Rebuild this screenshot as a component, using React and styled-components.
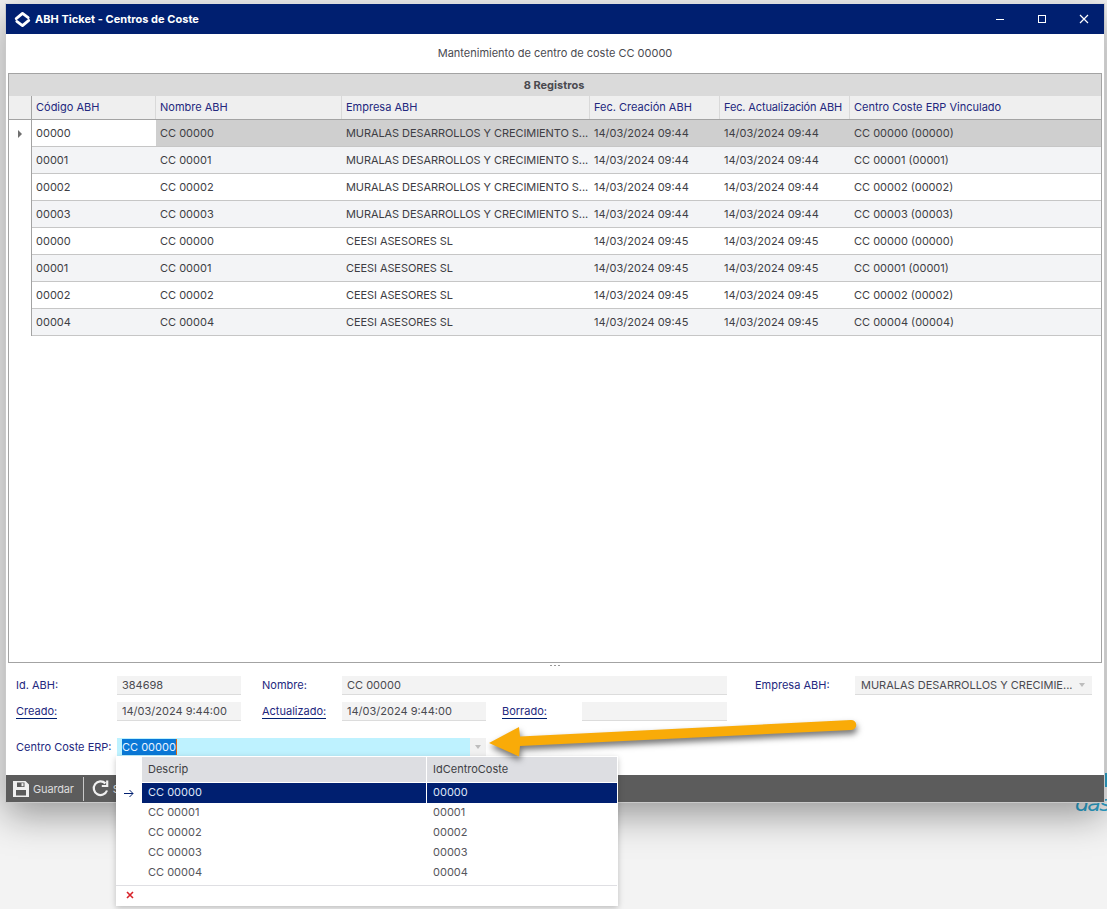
import React from "react";
import styled, { createGlobalStyle } from "styled-components";

const Global = createGlobalStyle`
  html, body { margin: 0; padding: 0; background: #f3f3f3; }
  #root { width: 1107px; height: 909px; overflow: hidden; }
  * { box-sizing: border-box; }
`;
const navy = "#001f70";
const linkBlue = "#23287e";
const textGrey = "#4a4a50";

const Desktop = styled.div`
  position: relative; width: 1107px; height: 909px; overflow: hidden;
  padding: 3px 2px 0 5px; font: 11px Inter, "Liberation Sans", sans-serif; color: ${textGrey};
  background: #f3f3f3;
`;
const BackText = styled.div`
  position: absolute; left: 1075px; top: 791px; font: italic 22px "DejaVu Sans", sans-serif; color: #2ea6cf; letter-spacing: -1.6px;
`;
const BackDot = styled.div`
  position: absolute; left: 1104px; top: 773px; width: 3px; height: 14px; background: #2ea6cf;
`;
const Win = styled.div`
  position: relative; height: 800px; display: flex; flex-direction: column; background: #fff;
  border: 1px solid #c9c9c9; border-top-color: #dcdcdc;
  box-shadow: 0 12px 36px rgba(0,0,0,.38);
`;
const TitleBar = styled.div`
  height: 30px; flex: none; background: ${navy}; color: #fff; display: flex; align-items: center; padding: 0 0 0 8px;
`;
const Title = styled.span`
  font: 700 11px Inter, sans-serif; margin-left: 4px; flex: 1; letter-spacing: .03px;
`;
const WinBtn = styled.div`
  width: 42px; height: 30px; display: flex; align-items: center; justify-content: center; position: relative; left: 1px;
`;
const Subtitle = styled.div`
  height: 39px; flex: none; display: flex; align-items: center; justify-content: center; padding-bottom: 2px; color: ${textGrey};
`;
const GridBox = styled.div`
  flex: none; height: 590px; margin: 0 2px; border: 1px solid #a3a3a3; background: #fff;
`;
const GroupBar = styled.div`
  height: 22px; background: #dadada; font-weight: 700; display: flex; align-items: center; justify-content: center; padding: 0 2px 1px 0;
`;
const cols = "23px 124px 186px 248px 130px 130px 1fr";
const HeadRow = styled.div`
  display: grid; grid-template-columns: ${cols}; height: 24px; background: #efefef; border-bottom: 1px solid #a3a3a3;
`;
const HeadCell = styled.div`
  color: ${linkBlue}; padding-left: 4px; line-height: 23px; white-space: nowrap; overflow: hidden;
  border-right: 1px solid ${p => (p.$dark ? "#a3a3a3" : "#d9d9d9")};
  letter-spacing: ${p => (p.$tight ? "-.13px" : "0")};
  &:last-child { border-right: 0; }
`;
const Row = styled.div`
  display: grid; grid-template-columns: ${cols}; height: 27px; border-bottom: 1px solid #c6c6c6;
  background: ${p => (p.$sel ? "#cfcfcf" : p.$alt ? "#f3f4f6" : "#fff")};
`;
const Indicator = styled.div`
  background: #fff; border-right: 1px solid #a3a3a3; margin-bottom: -1px; display: flex; align-items: center; justify-content: center;
`;
const Tri = styled.div`
  width: 0; height: 0; border-left: 4px solid #6f6f6f; border-top: 4px solid transparent; border-bottom: 4px solid transparent;
`;
const Cell = styled.div`
  padding-left: 4px; line-height: 26px; white-space: nowrap; overflow: hidden;
  background: ${p => (p.$focus ? "#fff" : "transparent")};
  color: #3e3e44;
  letter-spacing: ${p => (p.$tight ? "-.08px" : "0")};
`;
const Splitter = styled.div`
  height: 8px; flex: none; display: flex; justify-content: center; padding: 2px 0 0 0;
`;
const SplitDots = styled.div`
  width: 10px; height: 1px; background: repeating-linear-gradient(90deg, #999 0 2px, transparent 2px 4px);
`;
const Form = styled.div`
  flex: 1; display: grid; align-content: start; padding: 5px 0 0 10px;
  grid-template-columns: 101px 124px 21px 80px 385px 28px 100px 237px;
  grid-template-rows: 19px 19px 19px;
  row-gap: 7px;
`;
const Label = styled.div`
  color: ${linkBlue}; line-height: 19px; white-space: nowrap;
  grid-column: ${p => p.$col};
`;
const ULabel = styled.span`
  border-bottom: 1px solid ${navy};
`;
const Field = styled.div`
  grid-column: ${p => p.$col}; background: #f3f3f3; border-bottom: 1px solid #dcdcdc; padding-left: ${p => p.$pad || "5px"}; line-height: 18px;
  display: flex; justify-content: space-between; white-space: nowrap; color: #4a4a50;
  width: ${p => p.$w || "auto"}; flex: ${p => (p.$grow ? 1 : "none")};
`;
const SubRow = styled.div`
  grid-column: 5; display: flex;
`;
const SubLabel = styled.div`
  color: ${linkBlue}; line-height: 19px; width: 80px; margin-left: 16px; flex: none;
`;
const Caret = styled.i`
  width: 0; height: 0; border-left: 3.5px solid transparent; border-right: 3.5px solid transparent; border-top: 4px solid #bdbdbd;
  align-self: center; margin: ${p => p.$m || "0 7px 0 0"};
`;
const ComboRow = styled.div`
  grid-column: 1 / -1; margin-top: 10px; display: flex; height: 18px; line-height: 18px;
`;
const ComboLabel = styled.div`
  width: 101px; color: ${linkBlue};
`;
const ComboInput = styled.div`
  width: 353px; height: 18px; background: #bef2ff; padding-left: 5px; display: flex;
`;
const Selected = styled.span`
  background: #0a78d7; color: #e8f3ff; border-right: 1px solid #e06a10; height: 16px; line-height: 16px; margin-top: 1px;
`;
const ComboBtn = styled.div`
  width: 16px; height: 18px; background: #f1f1f1; display: flex; align-items: center; justify-content: center;
`;
const Toolbar = styled.div`
  height: 27px; flex: none; background: #5c5c5c; display: flex; align-items: center; color: #dcdcdc; padding-left: 7px;
`;
const ToolBtn = styled.div`
  display: flex; align-items: center; gap: 4px; padding-right: 9px; font-size: 11px; letter-spacing: -.15px;
`;
const ToolSep = styled.div`
  width: 1px; height: 24px; background: #c8c8c8; margin-right: 8px;
`;
const Popup = styled.div`
  position: absolute; left: 116px; top: 756px; width: 502px; height: 150px; background: #fff; z-index: 3;
  box-shadow: 0 2px 6px rgba(0,0,0,.22); padding: 1px 1px 0 0;
`;
const PopHead = styled.div`
  display: grid; grid-template-columns: 26px 285px 190px; height: 26px;
`;
const PopHeadCell = styled.div`
  background: #dddee2; padding-left: 6px; line-height: 25px; color: #3e3e44; margin-right: ${p => (p.$gap ? "1px" : 0)};
  border-bottom: 1px solid #fff;
`;
const PopRow = styled.div`
  display: grid; grid-template-columns: 26px 285px 190px; height: 20px; line-height: 19px;
`;
const PopArrow = styled.div`
  display: flex; align-items: center; justify-content: center; padding-right: 1px;
`;
const PopCell = styled.div`
  padding-left: 6px; background: ${p => (p.$sel ? navy : "transparent")}; color: ${p => (p.$sel ? "#dfe6f7" : "#55555b")};
  margin-right: ${p => (p.$gap ? "1px" : 0)};
`;
const PopFoot = styled.div`
  border-top: 1px solid #dfdfe3; margin-top: 2px; height: 21px; padding: 0 0 2px 10px; display: flex; align-items: center;
`;
const ArrowSvg = styled.svg`
  position: absolute; left: 481px; top: 710px; z-index: 4; filter: drop-shadow(1px 4px 3px rgba(0,0,0,.55)); overflow: visible;
`;

const rows = [
  ["00000","CC 00000","MURALAS DESARROLLOS Y CRECIMIENTO S...","14/03/2024 09:44","14/03/2024 09:44","CC 00000 (00000)"],
  ["00001","CC 00001","MURALAS DESARROLLOS Y CRECIMIENTO S...","14/03/2024 09:44","14/03/2024 09:44","CC 00001 (00001)"],
  ["00002","CC 00002","MURALAS DESARROLLOS Y CRECIMIENTO S...","14/03/2024 09:44","14/03/2024 09:44","CC 00002 (00002)"],
  ["00003","CC 00003","MURALAS DESARROLLOS Y CRECIMIENTO S...","14/03/2024 09:44","14/03/2024 09:44","CC 00003 (00003)"],
  ["00000","CC 00000","CEESI ASESORES SL","14/03/2024 09:45","14/03/2024 09:45","CC 00000 (00000)"],
  ["00001","CC 00001","CEESI ASESORES SL","14/03/2024 09:45","14/03/2024 09:45","CC 00001 (00001)"],
  ["00002","CC 00002","CEESI ASESORES SL","14/03/2024 09:45","14/03/2024 09:45","CC 00002 (00002)"],
  ["00004","CC 00004","CEESI ASESORES SL","14/03/2024 09:45","14/03/2024 09:45","CC 00004 (00004)"],
];
const heads = ["Código ABH","Nombre ABH","Empresa ABH","Fec. Creación ABH","Fec. Actualización ABH","Centro Coste ERP Vinculado"];
const pop = [["CC 00000","00000"],["CC 00001","00001"],["CC 00002","00002"],["CC 00003","00003"],["CC 00004","00004"]];

const Logo = () => (
  <svg width="17" height="17" viewBox="0 0 17 17" fill="none" stroke="#fff" strokeWidth="2.8" strokeLinecap="round" strokeLinejoin="round">
    <path d="M2.2 7.6 L8.5 2.4 L14.2 6.6"/>
    <path d="M14.8 9.4 L8.5 14.6 L2.8 10.4"/>
  </svg>
);

export default function App() {
  return (
    <Desktop>
      <Global />
      <BackDot />
      <BackText>das</BackText>
      <Win>
        <TitleBar>
          <Logo />
          <Title>ABH Ticket - Centros de Coste</Title>
          <WinBtn><svg width="10" height="10"><path d="M1 5.5H9" stroke="#fff" strokeWidth="1"/></svg></WinBtn>
          <WinBtn><svg width="10" height="10"><rect x="1.5" y="1.5" width="7" height="7" fill="none" stroke="#fff"/></svg></WinBtn>
          <WinBtn><svg width="10" height="10"><path d="M1 1L9 9M9 1L1 9" stroke="#fff" strokeWidth="1.2"/></svg></WinBtn>
        </TitleBar>
        <Subtitle>Mantenimiento de centro de coste CC 00000</Subtitle>
        <GridBox>
          <GroupBar>8 Registros</GroupBar>
          <HeadRow>
            <HeadCell $dark />
            {heads.map((h, i) => <HeadCell key={h} $tight={i === 4}>{h}</HeadCell>)}
          </HeadRow>
          {rows.map((r, i) => (
            <Row key={i} $sel={i === 0} $alt={i % 2 === 1}>
              <Indicator>{i === 0 && <Tri />}</Indicator>
              {r.map((c, j) => <Cell key={j} $focus={i === 0 && j === 0} $tight={j === 2}>{c}</Cell>)}
            </Row>
          ))}
        </GridBox>
        <Splitter><SplitDots /></Splitter>
        <Form>
          <Label $col="1">Id. ABH:</Label>
          <Field $col="2">384698</Field>
          <Label $col="4">Nombre:</Label>
          <Field $col="5">CC 00000</Field>
          <Label $col="7">Empresa ABH:</Label>
          <Field $col="8" $pad="6px">MURALAS DESARROLLOS Y CRECIMIE...<Caret /></Field>
          <Label $col="1"><ULabel>Creado:</ULabel></Label>
          <Field $col="2">14/03/2024 9:44:00</Field>
          <Label $col="4"><ULabel>Actualizado:</ULabel></Label>
          <SubRow>
            <Field $w="144px">14/03/2024 9:44:00</Field>
            <SubLabel><ULabel>Borrado:</ULabel></SubLabel>
            <Field $grow />
          </SubRow>
          <ComboRow>
            <ComboLabel>Centro Coste ERP:</ComboLabel>
            <ComboInput><Selected>CC 00000</Selected></ComboInput>
            <ComboBtn><Caret $m="0" /></ComboBtn>
          </ComboRow>
        </Form>
        <Toolbar>
          <ToolBtn>
            <svg width="16" height="16" viewBox="0 0 16 16">
              <path fillRule="evenodd" fill="#f0f0f0" d="M0 0H12.5L16 3.5V16H0ZM4 1.5V6H11.5V1.5ZM3 9V14.5H13V9Z"/>
              <rect x="8.5" y="2.2" width="2" height="3" fill="#f0f0f0"/>
            </svg>
            Guardar
          </ToolBtn>
          <ToolSep />
          <ToolBtn>
            <svg width="17" height="17" viewBox="0 0 17 17" fill="none" stroke="#f0f0f0" strokeWidth="2.2">
              <path d="M15 10.5A6.8 6.8 0 1 1 13.4 3.4"/>
              <path d="M15.2 .5V6H9.8" strokeWidth="2.2"/>
            </svg>
            Salir
          </ToolBtn>
        </Toolbar>
      </Win>
      <Popup>
        <PopHead>
          <span />
          <PopHeadCell $gap>Descrip</PopHeadCell>
          <PopHeadCell>IdCentroCoste</PopHeadCell>
        </PopHead>
        {pop.map((p, i) => (
          <PopRow key={i}>
            <PopArrow>
              {i === 0 && (
                <svg width="11" height="9" viewBox="0 0 11 9" fill="none" stroke={navy}>
                  <path d="M1 4.5H10M6.5 1L10 4.5L6.5 8"/>
                </svg>
              )}
            </PopArrow>
            <PopCell $sel={i === 0} $gap>{p[0]}</PopCell>
            <PopCell $sel={i === 0}>{p[1]}</PopCell>
          </PopRow>
        ))}
        <PopFoot>
          <svg width="8" height="8" viewBox="0 0 8 8"><path d="M1 1L7 7M7 1L1 7" stroke="#d8232a" strokeWidth="1.6"/></svg>
        </PopFoot>
      </Popup>
      <ArrowSvg width="380" height="50" viewBox="0 0 380 50">
        <path d="M8 33 L38 17 L39 26.5 L370 10 A5 5 0 0 1 370.5 20 L39 36 L38 46.5 Z" fill="#f9ab08" strokeLinejoin="round"/>
      </ArrowSvg>
    </Desktop>
  );
}
